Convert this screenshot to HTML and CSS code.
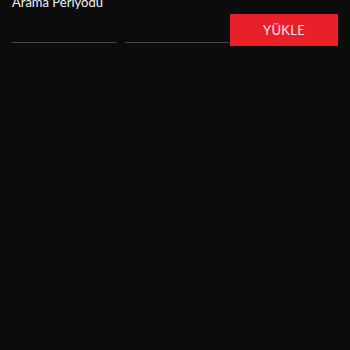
FILE: index.html
```html
<!DOCTYPE html>
<html lang="tr">
<head>
    <meta charset="UTF-8">
    <meta name="viewport" content="width=device-width, initial-scale=1.0">
    <title>Arama</title>
    <link rel="stylesheet" href="styles.css">
</head>
<body>
    <div class="search-form">
        <!-- Arama periyodu: iki tarih alanı -->
        <div class="field field-start">
            <label for="startDate">Arama Periyodu</label>
            <input type="text" id="startDate" class="date-input">
        </div>
        <div class="field field-end">
            <input type="text" id="endDate" class="date-input">
        </div>
        <button class="load-button">YÜKLE</button>
    </div>
</body>
</html>
```

FILE: styles.css
```css
body {
    margin: 0;
    height: 100vh;
    background-color: #0c0c0c;
    font-family: 'Lato', 'Noto Sans', sans-serif;
    color: white;
}

/* Fila del formulario */
.search-form {
    display: flex;
    align-items: flex-end;
    padding: 0 12px;
    margin-top: -6px;
}

.field {
    display: flex;
    flex-direction: column;
}

.field-start {
    width: 105px;
    margin-right: 8px;
}

.field-end {
    width: 105px;
}

.field label {
    font-size: 13px;
    line-height: 16px;
    color: #f2f2f2;
}

.date-input {
    height: 28px;
    margin-top: 4px;
    padding: 0;
    background: transparent;
    border: none;
    border-bottom: 1px solid #454545;
    outline: none;
    color: white;
}

.load-button {
    width: 108px;
    height: 32px;
    margin-bottom: -3px;
    margin-left: 0;
    background-color: #e8202a;
    color: #f4e6e6;
    border: none;
    font-family: 'Lato', 'Noto Sans', sans-serif;
    font-size: 13px;
    letter-spacing: 0.3px;
    cursor: pointer;
}
```
